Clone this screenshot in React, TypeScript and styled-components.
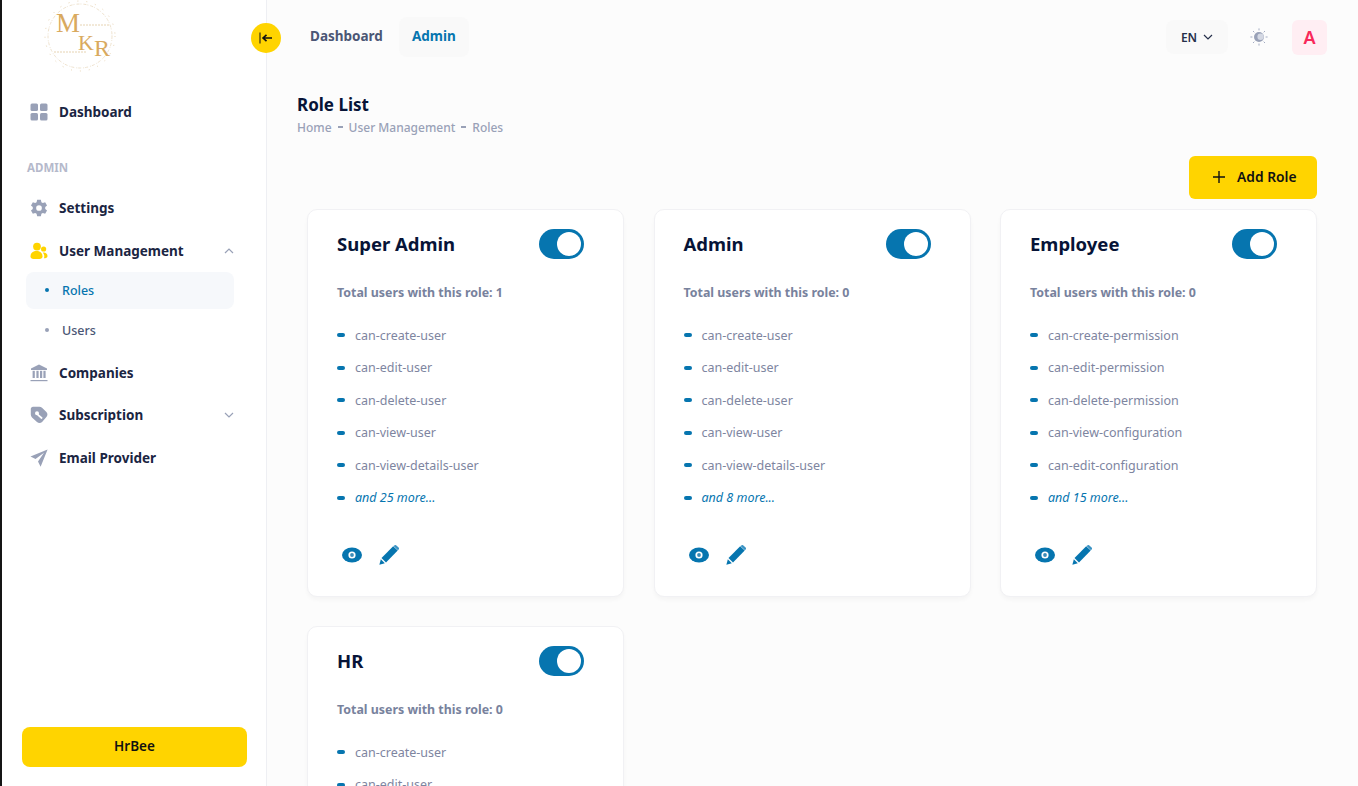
import React from "react";
import styled, { createGlobalStyle } from "styled-components";

const BLUE = "#0675af";
const YELLOW = "#ffd400";
const DARK = "#071437";
const FONT = `"Noto Sans", "Open Sans", Arial, sans-serif`;

const GlobalStyle = createGlobalStyle`
  html, body {
    margin: 0;
    height: 100%;
    overflow: hidden;
    background: #fcfcfc;
    font-family: ${FONT};
  }
  #root { height: 100%; }
  * { box-sizing: border-box; }
`;

const Page = styled.div`
  display: flex;
  height: 786px;
  overflow: hidden;
  border-left: 2px solid #151515;
`;

const Sidebar = styled.aside`
  position: relative;
  flex: 0 0 265px;
  display: flex;
  flex-direction: column;
  background: #fff;
  border-right: 1px solid #eeeff3;
  padding-bottom: 19px;
`;

const LogoBox = styled.div`
  height: 90px;
  padding: 0 0 0 40px;
`;

const CollapseButton = styled.button`
  position: absolute;
  top: 23px;
  right: -15px;
  width: 30px;
  height: 30px;
  padding: 0;
  border: none;
  border-radius: 50%;
  background: ${YELLOW};
  display: flex;
  align-items: center;
  justify-content: center;
  z-index: 2;
`;

const Menu = styled.nav`
  display: flex;
  flex-direction: column;
  padding: 0 32px 0 24px;
`;

const MenuRow = styled.div`
  height: 42.5px;
  display: flex;
  align-items: center;
  gap: 11px;
  padding: 1px 0 0 4px;
  font-size: 13.5px;
  font-weight: 700;
  color: #1b2542;
`;

const MenuIcon = styled.span`
  width: 18px;
  height: 18px;
  display: flex;
  align-items: center;
  justify-content: center;
`;

const Chevron = styled.span`
  margin-left: auto;
  display: flex;
  width: 10px;
  justify-content: center;
`;

const SectionLabel = styled.div`
  padding: 27px 0 11px 1px;
  line-height: 16px;
  font-size: 11.5px;
  font-weight: 700;
  color: #b5b9cb;
`;

const SubList = styled.div`
  display: flex;
  flex-direction: column;
  gap: 3px;
  margin-bottom: 2.7px;
`;

const SubItem = styled.div<{ $active?: boolean }>`
  height: 37px;
  display: flex;
  align-items: center;
  gap: 13px;
  padding-left: 19px;
  border-radius: 8px;
  font-size: 12.5px;
  font-weight: 500;
  background: ${(p) => (p.$active ? "#f6f8fb" : "transparent")};
  color: ${(p) => (p.$active ? BLUE : "#4b5675")};
`;

const SubDot = styled.span<{ $active?: boolean }>`
  width: 4px;
  height: 4px;
  border-radius: 50%;
  background: ${(p) => (p.$active ? BLUE : "#99a1b7")};
`;

const BrandButton = styled.button`
  margin: auto 0 0 20px;
  width: 225px;
  height: 40px;
  padding: 0 0 2px;
  border: none;
  border-radius: 8px;
  background: ${YELLOW};
  color: #111;
  font-family: ${FONT};
  font-size: 13.5px;
  font-weight: 600;
`;

const Main = styled.main`
  flex: 1;
  min-width: 0;
  display: flex;
  flex-direction: column;
`;

const TopBar = styled.header`
  height: 74px;
  flex: none;
  display: flex;
  align-items: center;
  padding: 0 31px 0 30px;
`;

const TopNav = styled.div`
  display: flex;
  gap: 3px;
`;

const TopLink = styled.div<{ $active?: boolean }>`
  height: 40px;
  padding: 0 13px 2px;
  display: flex;
  align-items: center;
  border-radius: 8px;
  font-size: 13.5px;
  font-weight: 700;
  background: ${(p) => (p.$active ? "#f9f9f9" : "transparent")};
  color: ${(p) => (p.$active ? BLUE : "#4b5675")};
`;

const TopActions = styled.div`
  margin-left: auto;
  display: flex;
  align-items: center;
`;

const LangButton = styled.div`
  width: 62px;
  height: 34px;
  margin-right: 19px;
  display: flex;
  align-items: center;
  justify-content: center;
  gap: 6px;
  border-radius: 8px;
  background: #f9f9f9;
  font-size: 12px;
  font-weight: 600;
  color: #252f4a;
`;

const ThemeIcon = styled.span`
  width: 24px;
  margin-right: 21px;
  display: flex;
  justify-content: center;
`;

const Avatar = styled.div`
  width: 35px;
  height: 35px;
  display: flex;
  align-items: center;
  justify-content: center;
  border-radius: 6px;
  background: #ffeef3;
  color: #f8285a;
  font-size: 18px;
  font-weight: 600;
`;

const PageHead = styled.div`
  padding: 20px 0 0 30px;
`;

const PageTitle = styled.h1`
  margin: 0;
  font-size: 17px;
  line-height: 22px;
  font-weight: 700;
  color: ${DARK};
`;

const Crumbs = styled.div`
  margin-top: 4px;
  display: flex;
  align-items: center;
  gap: 6px;
  line-height: 16px;
  font-size: 12px;
  font-weight: 500;
  color: #99a1b7;
`;

const CrumbDash = styled.span`
  width: 5px;
  height: 2px;
  background: #99a1b7;
  margin-top: -3px;
`;

const ActionRow = styled.div`
  display: flex;
  justify-content: flex-end;
  padding: 20px 41px 10px 0;
`;

const AddButton = styled.button`
  width: 128px;
  height: 43px;
  padding: 0 0 2px 24px;
  display: flex;
  align-items: center;
  gap: 12px;
  border: none;
  border-radius: 6px;
  background: ${YELLOW};
  color: #111;
  font-family: ${FONT};
  font-size: 13.8px;
  font-weight: 600;
`;

const CardGrid = styled.div`
  display: grid;
  grid-template-columns: repeat(3, 317px);
  column-gap: 29.5px;
  row-gap: 29px;
  padding-left: 40px;
`;

const Card = styled.section`
  height: 388px;
  padding: 19px 39px 0 29px;
  background: #fff;
  border: 1px solid #f1f1f4;
  border-radius: 10px;
  box-shadow: 0 3px 4px rgba(0, 0, 0, 0.03);
`;

const CardHead = styled.div`
  height: 30px;
  display: flex;
  align-items: center;
  justify-content: space-between;
`;

const CardTitle = styled.h2`
  margin: 0;
  padding-bottom: 2px;
  font-size: 18.5px;
  font-weight: 700;
  color: ${DARK};
`;

const Toggle = styled.div`
  width: 45px;
  height: 30px;
  padding: 3px;
  display: flex;
  justify-content: flex-end;
  border-radius: 15px;
  background: ${BLUE};
`;

const ToggleKnob = styled.span`
  width: 24px;
  height: 24px;
  border-radius: 50%;
  background: #fff;
`;

const UserCount = styled.div`
  margin-top: 25px;
  line-height: 18px;
  font-size: 12.4px;
  font-weight: 700;
  color: #78829d;
`;

const PermissionList = styled.ul`
  list-style: none;
  margin: 17px 0 0;
  padding: 0;
`;

const PermissionItem = styled.li<{ $more?: boolean }>`
  height: 32.5px;
  display: flex;
  align-items: center;
  gap: 10px;
  font-size: 12.5px;
  font-style: ${(p) => (p.$more ? "italic" : "normal")};
  color: ${(p) => (p.$more ? BLUE : "#7e859f")};
`;

const Bullet = styled.span`
  width: 8px;
  height: 4px;
  border-radius: 2px;
  background: ${BLUE};
`;

const CardActions = styled.div`
  margin-top: 29px;
  height: 24px;
  padding-left: 5px;
  display: flex;
  align-items: center;
  gap: 17px;
`;

const Logo = () => (
  <svg width="76" height="76" viewBox="0 0 76 76">
    <circle cx="38" cy="36" r="32" fill="none" stroke="#efe3cf" strokeWidth="1" strokeDasharray="3 1 1 2" />
    <circle cx="38" cy="36" r="35" fill="none" stroke="#e8d5b4" strokeWidth="1" strokeDasharray="1 8" />
    <path d="M38 25h30M12 52h32" stroke="#e6d3b2" strokeWidth="1" strokeDasharray="2 1" />
    <g fontFamily="'Liberation Serif', serif" fill="#d9aa5f">
      <text x="14" y="32" fontSize="27">M</text>
      <text x="36" y="50" fontSize="22">K</text>
      <text x="52" y="56" fontSize="24">R</text>
    </g>
  </svg>
);

const GridIcon = () => (
  <svg width="18" height="18" viewBox="0 0 18 18" fill="#99a1b7">
    <rect x="0.5" y="0.5" width="7.5" height="7.5" rx="1.5" />
    <rect x="10" y="0.5" width="7.5" height="7.5" rx="1.5" />
    <rect x="0.5" y="10" width="7.5" height="7.5" rx="1.5" />
    <rect x="10" y="10" width="7.5" height="7.5" rx="1.5" />
  </svg>
);

const GearIcon = () => (
  <svg width="18" height="18" viewBox="0 0 24 24">
    <path
      fill="#99a1b7"
      fillRule="evenodd"
      d="M9.5 1h5l.7 3.2 1.9 1.1 3.1-1 2.5 4.3-2.4 2.2v2.4l2.4 2.2-2.5 4.3-3.1-1-1.9 1.1-.7 3.2h-5l-.7-3.2-1.9-1.1-3.1 1-2.5-4.3 2.4-2.2v-2.4L1.3 8.6l2.5-4.3 3.1 1 1.9-1.1zM12 8.2a3.8 3.8 0 1 0 0 7.6 3.8 3.8 0 0 0 0-7.6z"
    />
  </svg>
);

const UsersIcon = () => (
  <svg width="18" height="18" viewBox="0 0 18 18" fill={YELLOW}>
    <circle cx="7" cy="4.6" r="3.9" />
    <circle cx="13.6" cy="7" r="2.6" />
    <path d="M0.5 14.5c0-3.6 2.6-5.4 6-5.4s6 1.8 6 5.4c0 1.6-1.2 2.5-3 2.5h-6c-1.8 0-3-.9-3-2.5z" />
    <path d="M13.5 10.6c2.3 0 4 1.2 4 3.4 0 1.4-1 2.2-2.4 2.2h-1.2c.3-.6.4-1.2.4-1.9 0-1.5-.5-2.7-1.4-3.6.2-.1.4-.1.6-.1z" />
  </svg>
);

const BankIcon = () => (
  <svg width="18" height="18" viewBox="0 0 18 18" fill="#99a1b7">
    <path d="M9 0.5 17 4.4V6H1V4.4z" />
    <rect x="2.6" y="6.8" width="2.2" height="7.2" />
    <rect x="6.4" y="6.8" width="2.2" height="7.2" />
    <rect x="10" y="6.8" width="2.2" height="7.2" />
    <rect x="13.4" y="6.8" width="2.2" height="7.2" />
    <rect x="0.5" y="16" width="17" height="1.2" />
  </svg>
);

const TagIcon = () => (
  <svg width="18" height="18" viewBox="0 0 18 18">
    <path
      fill="#99a1b7"
      fillRule="evenodd"
      d="M3 0.8h6.4c1 0 1.9.4 2.6 1l4.4 4.3c1.4 1.4 1.4 3.6 0 5l-4.3 4.8c-1.4 1.5-3.7 1.5-5.1.1L2 11.4c-.8-.8-1.2-1.8-1.2-2.9V3C.8 1.8 1.8.8 3 .8zM7 5.2a2 2 0 1 0 0 4 2 2 0 0 0 0-4z"
    />
    <path d="M8 8.8l3.6 3.2" stroke="#fff" strokeWidth="1.8" strokeLinecap="round" />
  </svg>
);

const PlaneIcon = () => (
  <svg width="18" height="18" viewBox="0 0 18 18" fill="#99a1b7">
    <path d="M17.6 0.6 0.5 7.4l5 2.6L14 3.8 8 12.5 10.6 17.8z" />
  </svg>
);

const SmallChevron = ({ up, color = "#99a1b7" }: { up?: boolean; color?: string }) => (
  <svg width="10" height="6" viewBox="0 0 10 6" fill="none" stroke={color} strokeWidth="1.2">
    <path d={up ? "M1 5l4-4 4 4" : "M1 1l4 4 4-4"} />
  </svg>
);

const CollapseIcon = () => (
  <svg width="14" height="12" viewBox="0 0 14 12" fill="none">
    <path d="M1 0.5v11" stroke="#5c4f10" strokeWidth="1.5" />
    <path d="M13 6H4.5M7.5 2.8 4 6l3.5 3.2" stroke="#111" strokeWidth="1.6" />
  </svg>
);

const ThemeGlyph = () => (
  <svg width="18" height="18" viewBox="0 0 18 18" fill="none">
    <circle cx="9" cy="9" r="5" fill="#99a1b7" />
    <circle cx="10.6" cy="8.8" r="3.2" fill="#d4d8e3" />
    <path
      d="M9 .4v2M9 15.6v2M.4 9h2M15.6 9h2M3 3l1.3 1.3M13.7 13.7 15 15M3 15l1.3-1.3M13.7 4.3 15 3"
      stroke="#a4acc2"
      strokeWidth="1"
    />
  </svg>
);

const PlusIcon = () => (
  <svg width="12" height="12" viewBox="0 0 12 12" stroke="#111" strokeWidth="1.4">
    <path d="M6 0v12M0 6h12" />
  </svg>
);

const EyeIcon = () => (
  <svg width="20" height="16" viewBox="0 0 20 16">
    <ellipse cx="10" cy="8" rx="10" ry="7.5" fill={BLUE} />
    <circle cx="10" cy="8" r="3.6" fill="#fff" />
    <circle cx="10" cy="8" r="1.9" fill="#3b8cb8" />
  </svg>
);

const PencilIcon = () => (
  <svg width="20" height="20" viewBox="0 0 20 20" fill={BLUE}>
    <path d="M14.2 1.3 18.7 5.6 7 17.4 2.5 13z" />
    <path d="M1.8 14.2 5.8 18.3.4 19.7z" />
    <path d="M15.3.4c.7-.6 1.5-.5 2.1 0l2.2 2.2c.6.6.6 1.4 0 2l-.7.7-4.4-4.3z" fill="#3b93c4" />
  </svg>
);

type Role = { name: string; users: number; permissions: string[]; more: number };

const userPermissions = ["can-create-user", "can-edit-user", "can-delete-user", "can-view-user", "can-view-details-user"];

const roles: Role[] = [
  { name: "Super Admin", users: 1, permissions: userPermissions, more: 25 },
  { name: "Admin", users: 0, permissions: userPermissions, more: 8 },
  {
    name: "Employee",
    users: 0,
    permissions: [
      "can-create-permission",
      "can-edit-permission",
      "can-delete-permission",
      "can-view-configuration",
      "can-edit-configuration",
    ],
    more: 15,
  },
  { name: "HR", users: 0, permissions: userPermissions, more: 3 },
];

export default function App() {
  return (
    <>
      <GlobalStyle />
      <Page>
        <Sidebar>
          <LogoBox>
            <Logo />
          </LogoBox>
          <CollapseButton aria-label="Collapse sidebar">
            <CollapseIcon />
          </CollapseButton>
          <Menu>
            <MenuRow>
              <MenuIcon><GridIcon /></MenuIcon>
              Dashboard
            </MenuRow>
            <SectionLabel>ADMIN</SectionLabel>
            <MenuRow>
              <MenuIcon><GearIcon /></MenuIcon>
              Settings
            </MenuRow>
            <MenuRow>
              <MenuIcon><UsersIcon /></MenuIcon>
              User Management
              <Chevron><SmallChevron up /></Chevron>
            </MenuRow>
            <SubList>
              <SubItem $active>
                <SubDot $active />
                Roles
              </SubItem>
              <SubItem>
                <SubDot />
                Users
              </SubItem>
            </SubList>
            <MenuRow>
              <MenuIcon><BankIcon /></MenuIcon>
              Companies
            </MenuRow>
            <MenuRow>
              <MenuIcon><TagIcon /></MenuIcon>
              Subscription
              <Chevron><SmallChevron /></Chevron>
            </MenuRow>
            <MenuRow>
              <MenuIcon><PlaneIcon /></MenuIcon>
              Email Provider
            </MenuRow>
          </Menu>
          <BrandButton>HrBee</BrandButton>
        </Sidebar>
        <Main>
          <TopBar>
            <TopNav>
              <TopLink>Dashboard</TopLink>
              <TopLink $active>Admin</TopLink>
            </TopNav>
            <TopActions>
              <LangButton>
                EN
                <SmallChevron color="#252f4a" />
              </LangButton>
              <ThemeIcon><ThemeGlyph /></ThemeIcon>
              <Avatar>A</Avatar>
            </TopActions>
          </TopBar>
          <PageHead>
            <PageTitle>Role List</PageTitle>
            <Crumbs>
              Home
              <CrumbDash />
              User Management
              <CrumbDash />
              Roles
            </Crumbs>
          </PageHead>
          <ActionRow>
            <AddButton>
              <PlusIcon />
              Add Role
            </AddButton>
          </ActionRow>
          <CardGrid>
            {roles.map((role) => (
              <Card key={role.name}>
                <CardHead>
                  <CardTitle>{role.name}</CardTitle>
                  <Toggle><ToggleKnob /></Toggle>
                </CardHead>
                <UserCount>Total users with this role: {role.users}</UserCount>
                <PermissionList>
                  {role.permissions.map((permission) => (
                    <PermissionItem key={permission}>
                      <Bullet />
                      {permission}
                    </PermissionItem>
                  ))}
                  <PermissionItem $more>
                    <Bullet />
                    and {role.more} more...
                  </PermissionItem>
                </PermissionList>
                <CardActions>
                  <EyeIcon />
                  <PencilIcon />
                </CardActions>
              </Card>
            ))}
          </CardGrid>
        </Main>
      </Page>
    </>
  );
}
